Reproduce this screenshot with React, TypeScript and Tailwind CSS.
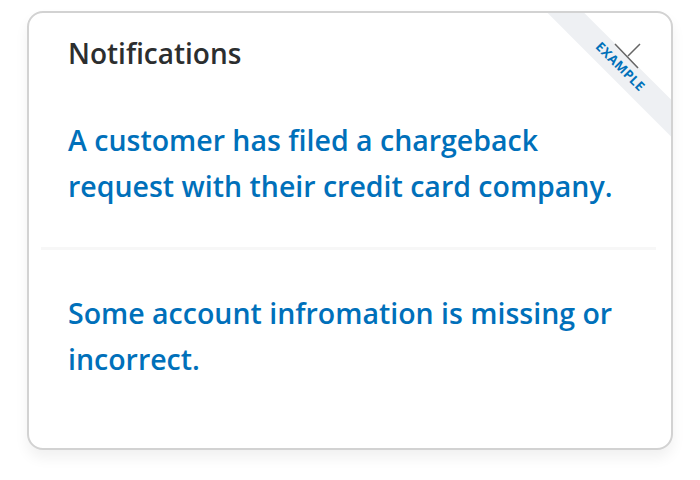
export default function App() {
  return (
    <div className="w-[700px] h-[480px] bg-white pt-[11px] pl-[27px] font-['Open_Sans','Liberation_Sans',sans-serif]">
      <div className="relative w-[646px] h-[439px] overflow-hidden rounded-[16px] border-2 border-[#d2d2d2] bg-white shadow-[0_8px_14px_rgba(0,0,0,0.06)]">
        {/* ribbon */}
        <div className="absolute left-[491px] top-[41px] flex h-[26px] w-[200px] rotate-45 items-center justify-center bg-[#eef0f3]">
          <span className="text-[13px] font-bold tracking-[0.5px] text-[#0070ba] uppercase">Example</span>
        </div>
        <svg className="absolute left-[580px] top-[25px]" width="40" height="40" viewBox="0 0 40 40">
          <path d="M6 6 L29 30 M19 18 L31 6" stroke="#666" strokeWidth="1.5" fill="none" />
        </svg>

        <h2 className="pl-[39px] pt-[23px] text-[28px] leading-[34px] font-semibold text-[#2c2e2f]">Notifications</h2>

        <p className="pl-[39px] pt-[47px] text-[28.5px] leading-[46px] font-semibold text-[#0070ba]">
          A customer has filed a chargeback
          <br />
          request with their credit card company.
        </p>

        <div className="mt-[38px] ml-[12px] mr-[15px] h-[3px] bg-[#f7f7f7]" />

        <p className="pl-[39px] pt-[40px] text-[28.5px] leading-[46px] font-semibold text-[#0070ba]">
          Some account infromation is missing or
          <br />
          incorrect.
        </p>
      </div>
    </div>
  );
}
